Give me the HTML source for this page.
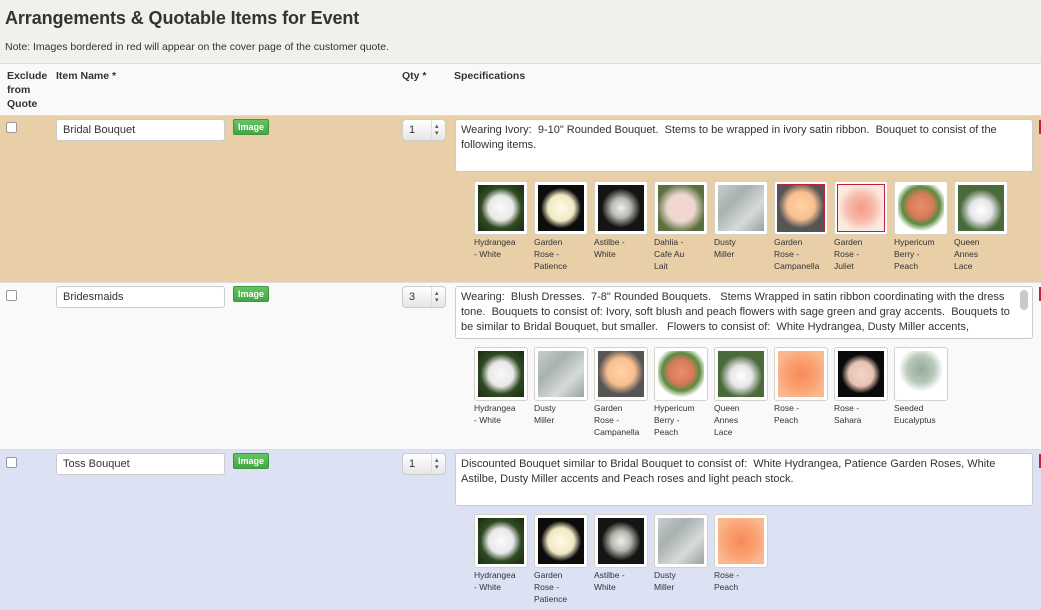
<!DOCTYPE html>
<html><head><meta charset="utf-8"><style>
*{box-sizing:border-box}
body{margin:0;width:1041px;height:608px;overflow:hidden;background:#f2f0ea;font-family:"Liberation Sans",Arial,sans-serif;color:#333;position:relative}
.a{position:absolute}
h1{position:absolute;left:5px;top:8px;margin:0;font-size:18px;font-weight:bold;color:#333;letter-spacing:-0.1px}
.note{left:5px;top:41px;font-size:10.5px}
.hdr{left:0;top:63px;width:1041px;height:53px;background:#f9f9f9;border-top:1px solid #ddd;border-bottom:1px solid #ddd;font-size:10.5px;font-weight:bold;line-height:14px}
.row{left:0;width:1041px;border-bottom:1px solid #ddd}
.cb{width:11px;height:11px;border:1px solid #999;border-radius:2px;background:#fff}
.inp{width:169px;height:22px;background:#fff;border:1px solid #ccc;border-radius:3px;font-size:11px;padding:4px 6px}
.btn{width:36px;height:16px;background:linear-gradient(#62c462,#44a744);border:1px solid #3c963c;border-radius:2px;color:#fff;font-size:9px;font-weight:bold;text-align:center;line-height:14px}
.qty{width:44px;height:22px;border:1px solid #ccc;border-radius:4px;background:linear-gradient(#fff,#e6e6e6);font-size:11px;padding:4px 6px}
.qty:after{content:"▴▾";position:absolute;right:4px;top:3px;font-size:7px;line-height:7px;width:6px;color:#555;word-wrap:break-word}
.qty:before{content:"";position:absolute;right:13px;top:0;height:20px;border-left:1px solid #ddd}
.ta{width:578px;height:53px;background:#fff;border:1px solid #ccc;border-radius:3px;font-size:11px;line-height:15px;padding:3px 5px;overflow:hidden}
.th{width:54px;height:54px;border:1px solid #d6d2c8;border-radius:3px;background:#fff;padding:3px}
.th.r div{outline:1px solid #c0203a}
.th div{width:46px;height:46px}
.lb{font-size:8.5px;line-height:12px;width:56px;color:#333}
.mark{right:0;width:2px;height:14px;background:#c0203a}
</style></head><body>
<h1>Arrangements &amp; Quotable Items for Event</h1>
<div class="a note">Note: Images bordered in red will appear on the cover page of the customer quote.</div>
<div class="a hdr"><div class="a" style="left:7px;top:5px">Exclude<br>from<br>Quote</div><div class="a" style="left:56px;top:5px">Item Name *</div><div class="a" style="left:402px;top:5px">Qty *</div><div class="a" style="left:454px;top:5px">Specifications</div></div>

<div class="a row" style="top:116px;height:167px;background:#e8cfa8"></div>
<div class="a row" style="top:283px;height:167px;background:#f9f9f9"></div>
<div class="a row" style="top:450px;height:160px;background:#dce1f4"></div>

<div class="a cb" style="left:6px;top:122px"></div>
<div class="a inp" style="left:56px;top:119px">Bridal Bouquet</div>
<div class="a btn" style="left:233px;top:119px">Image</div>
<div class="a qty" style="left:402px;top:119px">1</div>
<div class="a ta" style="left:455px;top:119px">Wearing Ivory:&nbsp; 9-10" Rounded Bouquet.&nbsp; Stems to be wrapped in ivory satin ribbon.&nbsp; Bouquet to consist of the following items.</div>
<div class="a mark" style="top:120px"></div>

<div class="a cb" style="left:6px;top:290px"></div>
<div class="a inp" style="left:56px;top:286px">Bridesmaids</div>
<div class="a btn" style="left:233px;top:286px">Image</div>
<div class="a qty" style="left:402px;top:286px">3</div>
<div class="a ta" style="left:455px;top:286px;padding-right:18px">Wearing:&nbsp; Blush Dresses.&nbsp; 7-8" Rounded Bouquets.&nbsp;&nbsp; Stems Wrapped in satin ribbon coordinating with the dress tone.&nbsp; Bouquets to consist of: Ivory, soft blush and peach flowers with sage green and gray accents.&nbsp; Bouquets to be similar to Bridal Bouquet, but smaller.&nbsp;&nbsp; Flowers to consist of:&nbsp; White Hydrangea, Dusty Miller accents,</div>
<div class="a" style="left:1020px;top:290px;width:8px;height:20px;background:#c8c8c8;border-radius:4px"></div>
<div class="a mark" style="top:287px"></div>

<div class="a cb" style="left:6px;top:457px"></div>
<div class="a inp" style="left:56px;top:453px">Toss Bouquet</div>
<div class="a btn" style="left:233px;top:453px">Image</div>
<div class="a qty" style="left:402px;top:453px">1</div>
<div class="a ta" style="left:455px;top:453px">Discounted Bouquet similar to Bridal Bouquet to consist of:&nbsp; White Hydrangea, Patience Garden Roses, White Astilbe, Dusty Miller accents and Peach roses and light peach stock.</div>
<div class="a mark" style="top:454px"></div>

<div id="thumbs"></div>
<script>
var F={
hyd:"radial-gradient(circle at 50% 50%,#fafafa 0,#e8e8e8 38%,#2f4a22 62%,#1a2a12 100%)",
pat:"radial-gradient(circle at 50% 50%,#fffbe6 0,#f1e8c2 40%,#0c0c0c 62%)",
ast:"radial-gradient(ellipse at 50% 50%,#f0f0ea 0,#b8b8b0 30%,#141414 60%)",
dah:"radial-gradient(circle at 50% 50%,#f6d8cc 0,#efd6d0 42%,#5a7040 75%)",
dus:"linear-gradient(135deg,#c8cdcd,#a8b0b0,#d6dada,#9aa2a2)",
cam:"radial-gradient(circle at 50% 45%,#ffd3a4 0,#f8bf90 40%,#555 66%)",
jul:"radial-gradient(circle at 50% 50%,#f59a88 0,#f7bcaa 42%,#fbe8e0 70%)",
hyp:"radial-gradient(circle at 50% 45%,#e8906a 0,#d87a5a 35%,#5c8a40 55%,#fff 75%)",
qal:"radial-gradient(circle at 50% 55%,#fff 0,#e6e6ea 32%,#4a6a3a 62%)",
rpe:"radial-gradient(circle at 50% 50%,#f68a5a 0,#fba070 45%,#f9b890 80%)",
sah:"radial-gradient(circle at 50% 50%,#f2d8cc 0,#e6c2b2 38%,#0a0a0a 60%)",
euc:"radial-gradient(circle at 50% 40%,#95ab98 0,#b8c8bb 38%,#fff 62%)"};
var rows=[
[181,[["hyd","Hydrangea<br>- White"],["pat","Garden<br>Rose -<br>Patience"],["ast","Astilbe -<br>White"],["dah","Dahlia -<br>Cafe Au<br>Lait"],["dus","Dusty<br>Miller"],["cam","Garden<br>Rose -<br>Campanella",1],["jul","Garden<br>Rose -<br>Juliet",1],["hyp","Hypericum<br>Berry -<br>Peach"],["qal","Queen<br>Annes<br>Lace"]]],
[347,[["hyd","Hydrangea<br>- White"],["dus","Dusty<br>Miller"],["cam","Garden<br>Rose -<br>Campanella"],["hyp","Hypericum<br>Berry -<br>Peach"],["qal","Queen<br>Annes<br>Lace"],["rpe","Rose -<br>Peach"],["sah","Rose -<br>Sahara"],["euc","Seeded<br>Eucalyptus"]]],
[514,[["hyd","Hydrangea<br>- White"],["pat","Garden<br>Rose -<br>Patience"],["ast","Astilbe -<br>White"],["dus","Dusty<br>Miller"],["rpe","Rose -<br>Peach"]]]];
var h="";
rows.forEach(function(r){r[1].forEach(function(t,i){var x=474+60*i;
h+='<div class="a th'+(t[2]?' r':'')+'" style="left:'+x+'px;top:'+r[0]+'px"><div style="background:'+F[t[0]]+'"></div></div>';
h+='<div class="a lb" style="left:'+x+'px;top:'+(r[0]+55)+'px">'+t[1]+'</div>';});});
document.getElementById("thumbs").innerHTML=h;
</script>
</body></html>
